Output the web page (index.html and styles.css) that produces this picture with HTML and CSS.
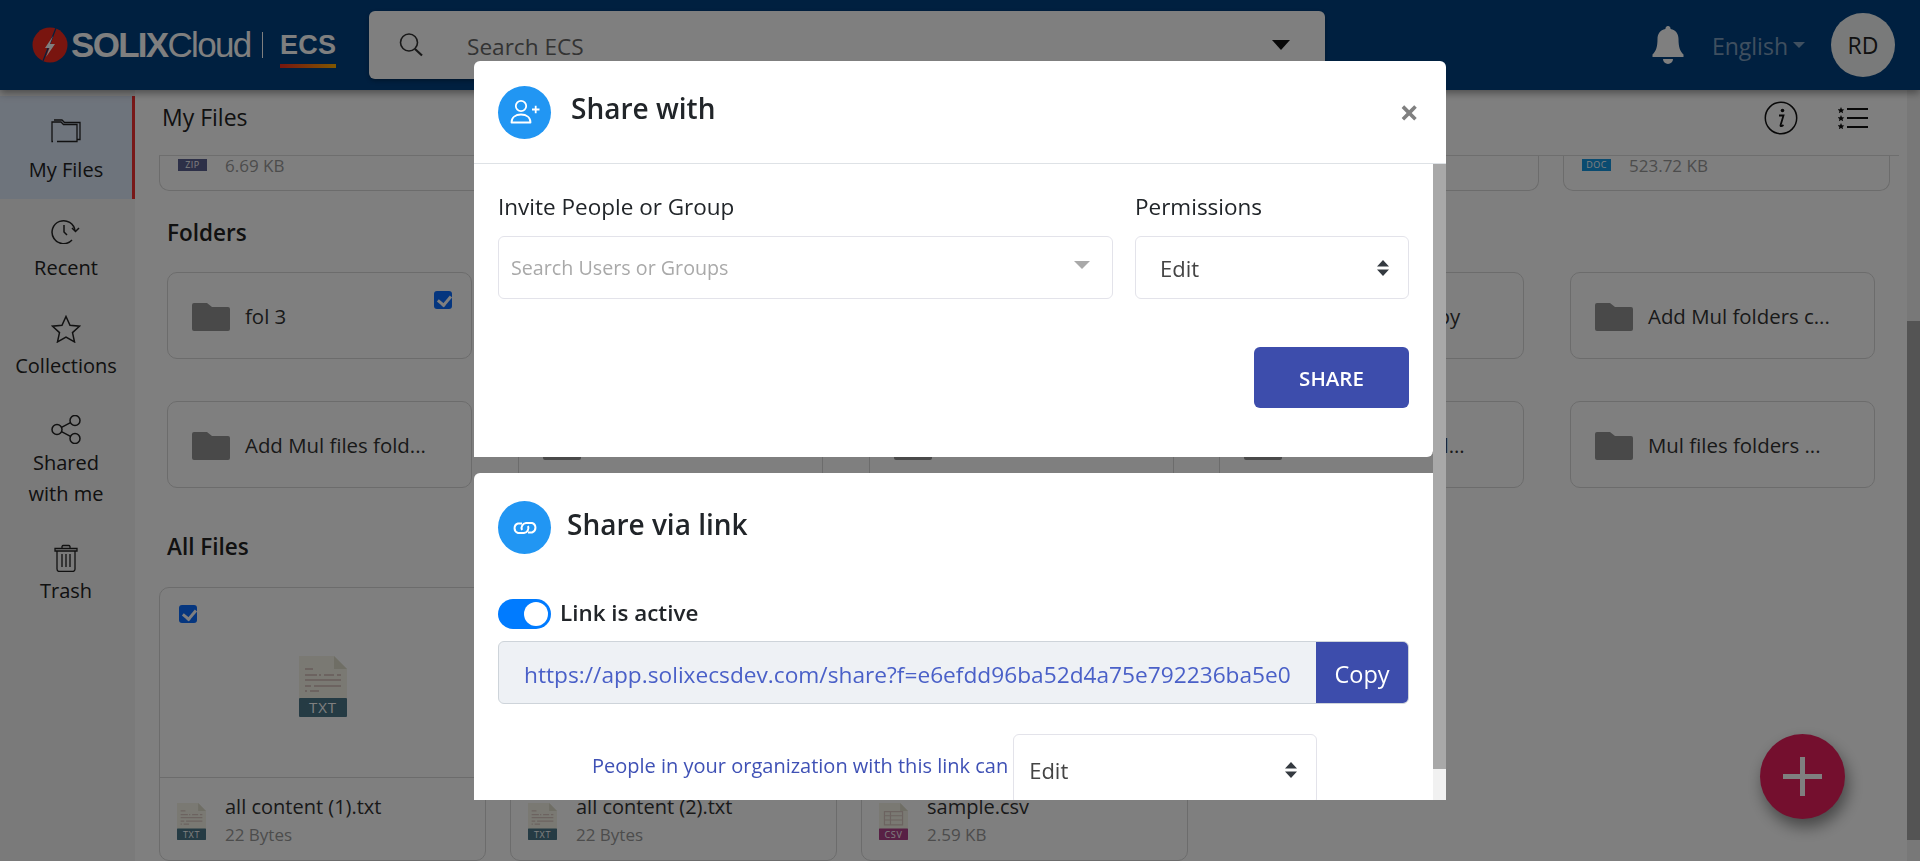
FILE: index.html
```html
<!DOCTYPE html>
<html lang="en">
<head>
    <meta charset="UTF-8">
    <title>SOLIXCloud ECS - My Files</title>
    <link rel="stylesheet" href="styles.css">
</head>
<body>
    <svg class="defs" width="0" height="0">
        <symbol id="folder" viewBox="0 0 38 28">
            <path d="M2 0h13l5 4h16a2 2 0 0 1 2 2v20a2 2 0 0 1-2 2H2a2 2 0 0 1-2-2V2a2 2 0 0 1 2-2z" fill="#939393"/>
        </symbol>
        <symbol id="file-txt" viewBox="0 0 48 61">
            <path d="M0 0h35l13 13v30H0z" fill="#f4f3e6"/>
            <path d="M35 0l13 13H35z" fill="#dedccb"/>
            <path d="M6 12h8v2H6zM6 18h12v2H6zM20 18h2v2h-2zM25 18h10v2H25zM38 18h4v2h-4zM6 23h36v2H6zM6 29h6v2H6zM15 29h27v2H15zM6 34h2v2H6zM11 34h9v2h-9z" fill="#d8c6c0"/>
            <rect y="42" width="48" height="19" rx="1" fill="#4a7688"/>
        </symbol>
        <symbol id="file-csv" viewBox="0 0 48 61">
            <path d="M0 0h35l13 13v30H0z" fill="#f4f3e6"/>
            <path d="M35 0l13 13H35z" fill="#dedccb"/>
            <path d="M9 14h30v22H9zM9 21h30M9 28h30M19 14v22" fill="none" stroke="#d8c6c0" stroke-width="2"/>
            <rect y="42" width="48" height="19" rx="1" fill="#b0408a"/>
        </symbol>
    </svg>

    <header class="topbar">
        <div class="logo">
            <svg class="logo-mark" width="36" height="36" viewBox="0 0 36 36">
                <circle cx="18" cy="18" r="17.500" fill="#f22a1e"/>
                <path d="M24 1L11 34" stroke="#004080" stroke-width="1.200"/>
                <path d="M21 9l-8 12h4.500l-3.500 9 9-13h-5z" fill="#fff"/>
            </svg>
            <span class="logo-name"><b>SOLIX</b>Cloud</span>
            <span class="logo-sep"></span>
            <span class="logo-app">ECS</span>
        </div>
        <div class="search">
            <svg width="26" height="26" viewBox="0 0 26 26" fill="none" stroke="#333" stroke-width="1.600">
                <circle cx="11" cy="10.500" r="8.500"/>
                <path d="M17 17l7 6.500" stroke-width="2.200"/>
            </svg>
            <span class="search-text">Search ECS</span>
            <span class="search-caret"></span>
        </div>
        <div class="topbar-right">
            <svg class="bell" width="32" height="38" viewBox="0 0 32 38">
                <path d="M16 0a2.500 2.500 0 0 1 2.500 3c5.500 1 8 5 8 10 0 8 1.500 12 5 15.500V31H.500v-2.500C4 25 5.500 21 5.500 13c0-5 2.500-9 8-10A2.500 2.500 0 0 1 16 0zM11 33h10a5 5 0 0 1-10 0z" fill="#fff"/>
            </svg>
            <span class="lang">English</span>
            <span class="lang-caret"></span>
            <span class="avatar">RD</span>
        </div>
    </header>

    <div class="layout">
        <nav class="sidebar">
            <a class="nav-item active">
                <svg width="30" height="24" viewBox="0 0 30 24" fill="none" stroke="#222" stroke-width="1.300">
                    <path d="M2 22.500H1V5V3h9l2.500 2.500H26V22.500H6M4 22.500h0"/>
                    <path d="M3 1h8l2.500 2.500H29V20.500h-3"/>
                </svg>
                <span>My Files</span>
            </a>
            <a class="nav-item">
                <svg width="30" height="26" viewBox="0 0 30 26" fill="none" stroke="#222" stroke-width="1.500">
                    <path d="M24 13a11.500 11.500 0 1 0-3 9"/>
                    <path d="M13 7v7l3 3"/>
                    <path d="M21 10l3.500 3.500L28 10"/>
                </svg>
                <span>Recent</span>
            </a>
            <a class="nav-item">
                <svg width="30" height="28" viewBox="0 0 30 28" fill="none" stroke="#222" stroke-width="1.500">
                    <path d="M15 1.500l4 8.700 9.500 1-7 6.400 2 9.300-8.500-4.800-8.500 4.800 2-9.300-7-6.400 9.500-1z"/>
                </svg>
                <span>Collections</span>
            </a>
            <a class="nav-item">
                <svg width="30" height="29" viewBox="0 0 30 29" fill="none" stroke="#222" stroke-width="1.500">
                    <circle cx="6" cy="14.500" r="5"/>
                    <circle cx="24" cy="5.500" r="5"/>
                    <circle cx="24" cy="23.500" r="5"/>
                    <path d="M10.500 12.300L19.500 7.700M10.500 16.700l9 4.600"/>
                </svg>
                <span>Shared<br>with me</span>
            </a>
            <a class="nav-item">
                <svg width="24" height="28" viewBox="0 0 24 28" fill="none" stroke="#222" stroke-width="1.300">
                    <path d="M1 4.500h22v2.500H1zM8 4.500V2.500a1.500 1.500 0 0 1 1.500-1h5a1.500 1.500 0 0 1 1.500 1v2"/>
                    <path d="M3 7v18a2.500 2.500 0 0 0 2.500 2.500h13A2.500 2.500 0 0 0 21 25V7"/>
                    <path d="M8 10v13M12 10v13M16 10v13"/>
                </svg>
                <span>Trash</span>
            </a>
        </nav>

        <main class="main">
            <div class="titlebar">
                <span class="page-title">My Files</span>
                <svg width="34" height="34" viewBox="0 0 34 34">
                    <circle cx="17" cy="17" r="15.700" fill="none" stroke="#111" stroke-width="1.500"/>
                    <circle cx="18.500" cy="9.500" r="1.800" fill="#111"/>
                    <path d="M15 14.500h4.500l-3 10c0 1 1 1 3-.5" fill="none" stroke="#111" stroke-width="1.800"/>
                </svg>
                <svg width="30" height="22" viewBox="0 0 30 22">
                    <path d="M3 0l1 2.200 2.300.2-1.700 1.500.5 2.300L3 5l-2.100 1.200.5-2.300L-.3 2.400 2 2.200zM3 8l1 2.200 2.300.2-1.700 1.500.5 2.300L3 13l-2.100 1.200.5-2.300-1.700-1.500L2 10.200zM3 16l1 2.200 2.300.2-1.700 1.500.5 2.300L3 21l-2.100 1.200.5-2.300-1.700-1.500L2 18.200z" fill="#111"/>
                    <path d="M9 2h21M9 11h21M9 20h21" stroke="#111" stroke-width="2"/>
                </svg>
            </div>

            <div class="file-grid clipped">
                <div class="clip-card"><span class="badge badge-zip">ZIP</span><span class="size">6.69 KB</span></div>
                <div class="clip-card"></div>
                <div class="clip-card"></div>
                <div class="clip-card"></div>
                <div class="clip-card"><span class="badge badge-doc">DOC</span><span class="size">523.72 KB</span></div>
            </div>

            <h2 class="section-title">Folders</h2>
            <div class="folder-grid">
                <div class="folder"><svg class="folder-icon"><use href="#folder"/></svg><span>fol 3</span><span class="check"></span></div>
                <div class="folder"><svg class="folder-icon"><use href="#folder"/></svg></div>
                <div class="folder"><svg class="folder-icon"><use href="#folder"/></svg></div>
                <div class="folder"><svg class="folder-icon"><use href="#folder"/></svg><span>Add Mul file copy</span></div>
                <div class="folder"><svg class="folder-icon"><use href="#folder"/></svg><span>Add Mul folders c...</span></div>
                <div class="folder"><svg class="folder-icon"><use href="#folder"/></svg><span>Add Mul files fold...</span></div>
                <div class="folder"><svg class="folder-icon"><use href="#folder"/></svg></div>
                <div class="folder"><svg class="folder-icon"><use href="#folder"/></svg></div>
                <div class="folder"><svg class="folder-icon"><use href="#folder"/></svg><span>Add Mul folder l...</span></div>
                <div class="folder"><svg class="folder-icon"><use href="#folder"/></svg><span>Mul files folders ...</span></div>
            </div>

            <h2 class="section-title all-files">All Files</h2>
            <div class="file-grid">
                <div class="file-card">
                    <div class="preview">
                        <span class="check"></span>
                        <svg class="preview-icon" viewBox="0 0 48 61"><use href="#file-txt"/><text x="24" y="57" text-anchor="middle" class="file-tag">TXT</text></svg>
                    </div>
                    <div class="file-info">
                        <svg class="small-icon" viewBox="0 0 48 61"><use href="#file-txt"/><text x="24" y="57" text-anchor="middle" class="file-tag">TXT</text></svg>
                        <div><div class="file-name">all content (1).txt</div><div class="size">22 Bytes</div></div>
                    </div>
                </div>
                <div class="file-card">
                    <div class="preview"></div>
                    <div class="file-info">
                        <svg class="small-icon" viewBox="0 0 48 61"><use href="#file-txt"/><text x="24" y="57" text-anchor="middle" class="file-tag">TXT</text></svg>
                        <div><div class="file-name">all content (2).txt</div><div class="size">22 Bytes</div></div>
                    </div>
                </div>
                <div class="file-card">
                    <div class="preview"></div>
                    <div class="file-info">
                        <svg class="small-icon" viewBox="0 0 48 61"><use href="#file-csv"/><text x="24" y="57" text-anchor="middle" class="file-tag">CSV</text></svg>
                        <div><div class="file-name">sample.csv</div><div class="size">2.59 KB</div></div>
                    </div>
                </div>
            </div>
            <button class="fab"><span></span></button>
        </main>

        <div class="page-scroll"><div class="page-thumb"></div></div>
    </div>

    <div class="backdrop">
        <div class="modal">
            <div class="modal-header">
                <span class="round-icon">
                    <svg width="30" height="26" viewBox="0 0 30 26" fill="none" stroke="#fff" stroke-width="1.800">
                        <circle cx="11" cy="7" r="5.200"/>
                        <path d="M1.500 23.500c0-5 4-8 9.500-8s9.500 3 9.500 8z" stroke-linejoin="round"/>
                        <path d="M22 10.500h7.500M25.700 6.800v7.400"/>
                    </svg>
                </span>
                <h3 class="modal-title">Share with</h3>
                <span class="close">&times;</span>
            </div>
            <div class="modal-body">
                <div class="modal-cards">
                    <section class="card share-card">
                        <div class="share-fields">
                            <div>
                                <label class="field-label">Invite People or Group</label>
                                <div class="field">
                                    <span class="placeholder">Search Users or Groups</span>
                                    <span class="field-caret"></span>
                                </div>
                            </div>
                            <div>
                                <label class="field-label">Permissions</label>
                                <div class="field select">
                                    <span>Edit</span>
                                    <svg width="12" height="16" viewBox="0 0 12 16"><path d="M6 0l6 6.500H0zM6 16l6-6.500H0z" fill="#343a40"/></svg>
                                </div>
                            </div>
                        </div>
                        <div class="share-actions"><button class="share-btn">SHARE</button></div>
                    </section>

                    <section class="card link-card">
                        <div class="link-head">
                            <span class="round-icon">
                                <svg width="28" height="14" viewBox="0 0 28 14" fill="none" stroke="#fff" stroke-width="2">
                                    <path d="M11 2.500H7a5 5 0 0 0 0 9.500h6a5 5 0 0 0 4-7"/>
                                    <path d="M17 11.500h4a5 5 0 0 0 0-9.500h-6a5 5 0 0 0-4 7"/>
                                </svg>
                            </span>
                            <h3 class="modal-title">Share via link</h3>
                        </div>
                        <div class="toggle-row">
                            <span class="toggle"><span class="knob"></span></span>
                            <span class="toggle-label">Link is active</span>
                        </div>
                        <div class="link-group">
                            <span class="link-url">https://app.solixecsdev.com/share?f=e6efdd96ba52d4a75e792236ba5e0</span>
                            <button class="copy-btn">Copy</button>
                        </div>
                        <div class="perm-row">
                            <span class="perm-text">People in your organization with this link can</span>
                            <div class="field select perm-select">
                                <span>Edit</span>
                                <svg width="12" height="16" viewBox="0 0 12 16"><path d="M6 0l6 6.500H0zM6 16l6-6.500H0z" fill="#343a40"/></svg>
                            </div>
                        </div>
                    </section>
                </div>
                <div class="modal-scroll"><div class="modal-thumb"></div></div>
            </div>
        </div>
    </div>
</body>
</html>
```

FILE: styles.css
```css
* {
    box-sizing: border-box;
}
html, body {
    margin: 0;
    height: 100%;
    overflow: hidden;
}
body {
    font-family: "Open Sans", "Noto Sans", sans-serif;
    font-size: 18px;
    color: #212529;
    background-color: #fff;
    display: flex;
    flex-direction: column;
}
.defs {
    position: absolute;
}
.file-tag {
    font-family: "Open Sans", sans-serif;
    font-size: 15px;
    letter-spacing: 1px;
    fill: #fff;
}

/* top bar */
.topbar {
    height: 90px;
    flex: none;
    background-color: #004080;
    display: flex;
    align-items: center;
    padding: 0 25px 0 32px;
    box-shadow: 0 3px 8px rgba(0, 0, 0, 0.4);
    position: relative;
    z-index: 2;
}
.logo {
    width: 337px;
    display: flex;
    align-items: center;
    color: #fff;
    font-family: "Liberation Sans", sans-serif;
}
.logo-mark {
    flex: none;
}
.logo-name {
    font-size: 35px;
    letter-spacing: -1.700px;
    margin-left: 3px;
    width: 180px;
}
.logo-sep {
    width: 1px;
    height: 26px;
    background-color: #fff;
    margin: 0 17px 0 11px;
}
.logo-app {
    font-size: 27px;
    font-weight: bold;
    letter-spacing: 0.300px;
    padding-bottom: 4px;
    border-bottom: 4px solid;
    border-image: linear-gradient(90deg, #f22a1e, #ffb000) 1;
    line-height: 30px;
    margin-top: 7px;
}
.search {
    width: 956px;
    height: 68px;
    background-color: #fff;
    border-radius: 6px;
    display: flex;
    align-items: center;
    padding: 0 35px 0 29px;
    box-shadow: 0 2px 4px rgba(0, 0, 0, 0.3);
}
.search-text {
    margin-left: 43px;
    font-size: 22.600px;
    color: #666;
    margin-top: 2px;
    flex: 1;
}
.search-caret {
    border: 9px solid transparent;
    border-top: 10px solid #111;
    border-bottom: 0;
}
.topbar-right {
    margin-left: auto;
    display: flex;
    align-items: center;
}
.lang {
    margin-left: 28px;
    font-size: 23px;
    color: rgba(255, 255, 255, 0.5);
    margin-top: 2px;
}
.lang-caret {
    margin-left: 5px;
    border: 6px solid transparent;
    border-top: 6px solid rgba(255, 255, 255, 0.5);
    border-bottom: 0;
}
.avatar {
    width: 64px;
    height: 64px;
    border-radius: 50%;
    background-color: #f2f5f4;
    color: #222;
    font-size: 23px;
    margin-left: 26px;
    display: flex;
    align-items: center;
    justify-content: center;
}

/* page under the dialog */
.layout {
    flex: 1;
    display: flex;
    min-height: 0;
}
.sidebar {
    width: 135px;
    flex: none;
    background-color: #f4f4f4;
    padding-top: 6px;
}
.nav-item {
    display: flex;
    flex-direction: column;
    align-items: center;
    text-align: center;
    height: 98px;
    padding-top: 21px;
    border-right: 3px solid transparent;
    font-size: 20px;
    line-height: 31px;
    color: #222;
}
.nav-item svg {
    display: block;
    margin-bottom: 7px;
}
.nav-item.active {
    height: 103px;
    background-color: #dde8f8;
    border-right-color: #f03030;
    padding-top: 23px;
}
.nav-item.active svg {
    margin-bottom: 11px;
}
.nav-item:nth-child(2) {
    height: 95px;
    padding-top: 19px;
}
.nav-item:nth-child(2) svg {
    margin-bottom: 8px;
}
.nav-item:nth-child(3) {
    height: 100px;
}
.nav-item:nth-child(4) {
    height: 129px;
}
.nav-item:nth-child(4) svg {
    margin-bottom: 3px;
}
.nav-item:nth-child(5) svg {
    margin-bottom: 3px;
}
.main {
    flex: 1;
    min-width: 0;
    padding-left: 24px;
    position: relative;
}
.titlebar {
    height: 66px;
    margin-left: -24px;
    padding: 0 39px 10px 27px;
    display: flex;
    align-items: center;
    gap: 40px;
    position: relative;
}
.titlebar::after {
    content: "";
    position: absolute;
    left: 24px;
    right: 8px;
    bottom: 0;
    height: 1px;
    background-color: #ddd;
}
.page-title {
    font-size: 23px;
    color: #222;
    margin-right: auto;
    margin-top: -3px;
}
.file-grid {
    display: grid;
    grid-template-columns: repeat(5, 327px);
    column-gap: 24px;
}
.clipped {
    height: 35px;
}
.clip-card {
    border: 1px solid #d8d8d8;
    border-top: 0;
    border-radius: 0 0 10px 10px;
    display: flex;
    align-items: flex-start;
    padding: 2px 0 0 18px;
}
.badge {
    width: 29px;
    height: 12px;
    margin-top: 1px;
    color: #fff;
    font-size: 9px;
    line-height: 12px;
    text-align: center;
    letter-spacing: 0.500px;
}
.badge-zip {
    background-color: #5a6090;
}
.badge-doc {
    background-color: #1496e0;
}
.size {
    font-size: 17px;
    line-height: 20px;
    color: #999;
}
.clip-card .size {
    margin-left: 18px;
    margin-top: -2px;
}
.section-title {
    margin: 27px 0 24px 8px;
    font-size: 22.500px;
    line-height: 30px;
    font-weight: 600;
    color: #222;
}
.all-files {
    margin-top: 44px;
    margin-bottom: 25px;
}
.folder-grid {
    margin-left: 8px;
    display: grid;
    grid-template-columns: repeat(5, 305px);
    column-gap: 45.750px;
    row-gap: 42px;
}
.folder {
    height: 87px;
    border: 1px solid #d8d8d8;
    border-radius: 10px;
    display: flex;
    align-items: center;
    padding-left: 24px;
    font-size: 20.400px;
    color: #333;
    position: relative;
    white-space: nowrap;
}
.folder-icon {
    width: 38px;
    height: 28px;
    margin-right: 15px;
    flex: none;
    margin-top: 3px;
}
.check {
    position: absolute;
    width: 18px;
    height: 18px;
    border-radius: 3px;
    background-color: #0a6cff;
}
.check::after {
    content: "";
    position: absolute;
    left: 6px;
    top: 2px;
    width: 6px;
    height: 10px;
    border: solid #fff;
    border-width: 0 3px 3px 0;
    transform: rotate(40deg);
}
.folder .check {
    top: 18px;
    right: 19px;
}
.file-card {
    height: 274px;
    border: 1px solid #d8d8d8;
    border-radius: 10px;
    overflow: hidden;
}
.preview {
    height: 190px;
    border-bottom: 1px solid #d8d8d8;
    position: relative;
    display: flex;
    justify-content: center;
    padding-top: 68px;
}
.preview .check {
    top: 17px;
    left: 19px;
}
.preview-icon {
    width: 48px;
    height: 61px;
}
.file-info {
    display: flex;
    padding: 13px 0 0 17px;
    gap: 19px;
}
.small-icon {
    width: 29px;
    height: 37px;
    margin-top: 12px;
    flex: none;
}
.file-name {
    font-size: 20px;
    line-height: 32px;
    color: #333;
}
.file-info .size {
    display: block;
    padding-top: 2px;
}
.fab {
    position: absolute;
    right: 62px;
    bottom: 42px;
    width: 85px;
    height: 85px;
    border: 0;
    border-radius: 50%;
    background-color: #e91e5d;
    box-shadow: 3px 8px 16px rgba(0, 0, 0, 0.45);
    padding: 0;
}
.fab span {
    display: block;
    margin: auto;
    width: 39px;
    height: 39px;
    background:
        linear-gradient(#fff, #fff) center / 39px 5px no-repeat,
        linear-gradient(#fff, #fff) center / 5px 39px no-repeat;
}
.page-scroll {
    width: 13px;
    flex: none;
    background-color: #f1f1f1;
    padding-top: 231px;
}
.page-thumb {
    height: 519px;
    background-color: #a8a8a8;
}

/* dialog */
.backdrop {
    position: fixed;
    inset: 0;
    background-color: rgba(0, 0, 0, 0.5);
    z-index: 10;
}
.modal {
    position: absolute;
    left: 474px;
    top: 61px;
    width: 972px;
    height: 739px;
    display: flex;
    flex-direction: column;
    overflow: hidden;
    border-radius: 6px 6px 0 0;
}
.modal-header {
    height: 103px;
    flex: none;
    background-color: #fff;
    border-bottom: 1px solid #dee2e6;
    padding: 0 24px;
    display: flex;
    align-items: center;
}
.round-icon {
    width: 53px;
    height: 53px;
    flex: none;
    border-radius: 50%;
    background-color: #2196f3;
    display: flex;
    align-items: center;
    justify-content: center;
}
.modal-title {
    margin: -7px 0 0 20px;
    font-size: 28px;
    line-height: 36px;
    font-weight: 600;
    color: #212529;
}
.modal-header .modal-title {
    margin-top: -9px;
}
.close {
    margin-left: auto;
    margin-right: 3px;
    color: #808080;
    font-size: 34px;
    font-weight: 700;
    line-height: 34px;
}
.modal-body {
    flex: 1;
    min-height: 0;
    display: flex;
}
.modal-cards {
    flex: 1;
    min-width: 0;
}
.modal-scroll {
    width: 13px;
    flex: none;
    background-color: #f1f1f1;
}
.modal-thumb {
    height: 605px;
    background-color: #a8a8a8;
}
.card {
    background-color: #fff;
    padding: 0 24px;
}
.share-card {
    height: 293px;
    border-radius: 0 0 6px 0;
    padding-top: 27px;
}
.share-fields {
    display: grid;
    grid-template-columns: 615px 274px;
    column-gap: 22px;
}
.field-label {
    display: block;
    font-size: 22.500px;
    line-height: 32px;
    margin-bottom: 13px;
}
.field {
    height: 63px;
    border: 1px solid #e3e3ea;
    border-radius: 6px;
    display: flex;
    align-items: center;
    padding: 0 18px 0 12px;
    position: relative;
    justify-content: space-between;
}
.placeholder {
    color: #a9a9a9;
    font-size: 19.700px;
}
.field-caret {
    border: 8px solid transparent;
    border-top: 8px solid #a9a9a9;
    border-bottom: 0;
    margin-right: 4px;
    margin-top: -6px;
}
.select {
    padding: 0 19px 0 24px;
    font-size: 22px;
    color: #444;
}
.share-actions {
    display: flex;
    justify-content: flex-end;
    margin-top: 48px;
}
.share-btn {
    width: 155px;
    height: 61px;
    border: 0;
    border-radius: 6px;
    background-color: #3d4dac;
    color: #fff;
    font-family: inherit;
    font-size: 20.500px;
    font-weight: 600;
}
.link-card {
    margin-top: 16px;
    height: 400px;
    border-radius: 6px 0 0 0;
    padding-top: 28px;
}
.link-head {
    display: flex;
    align-items: center;
}
.link-head .modal-title {
    margin-left: 16px;
}
.toggle-row {
    display: flex;
    align-items: center;
    margin-top: 45px;
    gap: 9px;
}
.toggle {
    width: 53px;
    height: 30px;
    border-radius: 15px;
    background-color: #007bff;
    position: relative;
}
.knob {
    position: absolute;
    right: 3px;
    top: 3px;
    width: 24px;
    height: 24px;
    border-radius: 50%;
    background-color: #fff;
}
.toggle-label {
    font-size: 22.400px;
    font-weight: 600;
    color: #212529;
    margin-top: -4px;
}
.link-group {
    margin-top: 12px;
    height: 63px;
    width: 911px;
    display: flex;
    border: 1px solid #ced4da;
    border-radius: 6px;
    background-color: #eef1f5;
    overflow: hidden;
}
.link-url {
    flex: 1;
    min-width: 0;
    padding: 3px 0 0 25px;
    align-self: center;
    font-size: 22.700px;
    color: #4a60c8;
    white-space: nowrap;
}
.copy-btn {
    width: 92px;
    flex: none;
    border: 0;
    background-color: #3d4dac;
    color: #fff;
    font-family: inherit;
    font-size: 23.500px;
    padding: 2px 0 0;
}
.perm-row {
    margin-top: 30px;
    margin-left: 94px;
    display: flex;
    align-items: flex-start;
    gap: 5px;
}
.perm-text {
    font-size: 20px;
    line-height: 30px;
    margin-top: 17px;
    color: #3f51b5;
    white-space: nowrap;
}
.perm-select {
    width: 304px;
    height: 71px;
    padding-left: 15px;
    padding-right: 19px;
    flex: none;
}
```
